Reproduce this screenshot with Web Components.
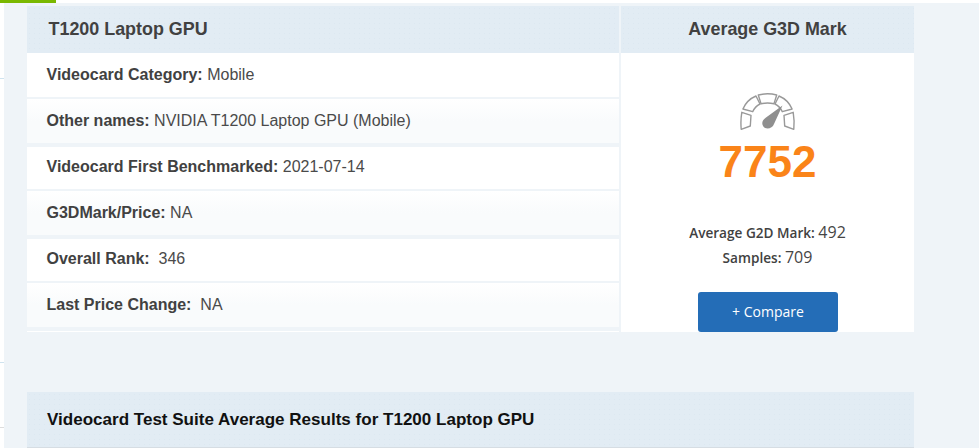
<!DOCTYPE html>
<html><head><meta charset="utf-8"><style>
html,body{margin:0;padding:0;height:448px;overflow:hidden;background:#eff4f8;font-family:"Liberation Sans",Arial,sans-serif}
</style></head><body>
<template id="t-row"><style>
:host{display:block;height:42px;box-sizing:border-box;margin-bottom:2px;background:#fff;padding:0 0 0 19.5px;line-height:39px;font-size:16px;color:#4a4a4a;white-space:pre}
:host(:first-child){height:44px;line-height:43px}
:host([alt]){height:44px;line-height:43px;margin-bottom:4px;background:#fafcfd linear-gradient(#fff,#f9fbfc 50%)}
::slotted(b){color:#414141;font-weight:700}
</style><slot></slot></template>
<template id="t-head"><style>
:host{display:block;height:47px;box-sizing:border-box;background:#e2ecf4 radial-gradient(#dce8f1 .6px,transparent .9px) 0 0/5px 5px;color:#414141;font-weight:700;font-size:17.9px;line-height:46px}
</style><slot></slot></template>
<template id="t-gauge"><style>
:host{display:block;width:56px;height:38px}svg{display:block}
</style><svg width="56" height="38" viewBox="0 0 56 38" fill="none" stroke="#999" stroke-width="1.4" stroke-linejoin="round">
<path d="M1.8 19.3 11 22.3 10.3 33 1.2 36.3C.7 30.5.8 25 1.8 19.3Z"/>
<path d="M2.9 16C5.5 10 10 5.5 16 3L20 11C16.8 12.6 14.4 15 12.7 18.7Z"/>
<path d="M18.3 2C24.5 .3 30.5 .3 36.7 2L34 10.7C30 9.8 25 9.8 21 10.7Z"/>
<path d="M39 3C45 5.5 49.5 10 52.1 16L42.3 18.7C40.6 15 38.2 12.6 35 11Z"/>
<path d="M53.2 19.3C54.2 25 54.3 30.5 53.8 36.3L44.7 33 44 22.3Z"/>
<path d="M42.5 12.5 34 31C32.5 35.8 25.5 37 23.2 33.3 21 29.5 23 26.5 26 24.5Z" fill="#8f8f8f" stroke="none"/>
</svg></template>
<template id="t-compare"><style>
:host{display:block;width:140px;height:40px;background:#246db7;border-radius:3px;color:#fff;font:14px/40px "Open Sans",sans-serif;text-align:center;text-indent:1px}
</style><slot></slot></template>
<template id="t-score"><style>
:host{display:flex;flex-direction:column;align-items:center;background:#fff;height:279px;box-sizing:border-box;padding-top:40px}
.num{font:700 44px/56px "Liberation Sans",sans-serif;color:#fa8419;margin-top:3px}
.info{font:13.6px/25px "Open Sans",sans-serif;color:#454545;text-align:center;margin-top:30px}
.info b{font-weight:600;color:#414141}
.info span{font-size:16px}
.btn{margin-top:auto}
</style><pv-gauge></pv-gauge><div class="num"><slot name="score"></slot></div>
<div class="info"><b>Average G2D Mark:</b> <span><slot name="g2d"></slot></span><br><b>Samples:</b> <span><slot name="samples"></slot></span></div>
<pv-compare class="btn">+ Compare</pv-compare></template>
<template id="t-page"><style>
:host{display:block;width:979px;height:448px;position:relative;overflow:hidden;background:#eff4f8}
.topbar{height:3px;background:#fff}
.topbar i{display:block;width:56px;height:3px;background:#7ab800}
.wrap{padding:3px 65px 0 27px}
.grid{display:grid;grid-template-columns:592px 293px;column-gap:2px}
.right{display:flex;flex-direction:column}
.rule{height:1px;background:#fff}
.suite{margin-top:60px}
.suite pv-head{height:56px;line-height:55px;color:#111;font-size:17.05px;padding-left:20px;border-bottom:1px solid #d6dde3}
.h1{padding-left:21.5px}.h2{text-align:center}
.strip{position:absolute;left:0;top:3px;width:4px;height:445px;background:#fff}
.strip i{position:absolute;left:0;width:4px;height:1px;background:#cfe3ef}
</style>
<div class="topbar"><i></i></div><div class="strip"><i style="top:75px"></i><i style="top:359px"></i><i style="top:424px;background:#ddd"></i></div>
<div class="wrap"><div class="grid">
<div class="left"><pv-head class="h1">T1200 Laptop GPU</pv-head><slot name="rows"></slot><div class="rule"></div></div>
<div class="right"><pv-head class="h2">Average G3D Mark</pv-head><slot name="score"></slot></div>
</div>
<div class="suite"><pv-head>Videocard Test Suite Average Results for T1200 Laptop GPU</pv-head></div>
</div></template>
<pv-page>
<pv-row slot="rows"><b>Videocard Category:</b> Mobile</pv-row>
<pv-row slot="rows" alt><b>Other names:</b> NVIDIA T1200 Laptop GPU (Mobile)</pv-row>
<pv-row slot="rows"><b>Videocard First Benchmarked:</b> 2021-07-14</pv-row>
<pv-row slot="rows" alt><b>G3DMark/Price:</b> NA</pv-row>
<pv-row slot="rows"><b>Overall Rank:</b>  346</pv-row>
<pv-row slot="rows" alt><b>Last Price Change:</b>  NA</pv-row>
<pv-score slot="score"><span slot="score">7752</span><span slot="g2d">492</span><span slot="samples">709</span></pv-score>
</pv-page>
<script>
for (const [tag,id] of [['pv-row','t-row'],['pv-head','t-head'],['pv-gauge','t-gauge'],['pv-compare','t-compare'],['pv-score','t-score'],['pv-page','t-page']]) {
  customElements.define(tag, class extends HTMLElement {
    constructor(){super();this.attachShadow({mode:'open'}).appendChild(document.getElementById(id).content.cloneNode(true));}
  });
}
</script>
</body></html>
